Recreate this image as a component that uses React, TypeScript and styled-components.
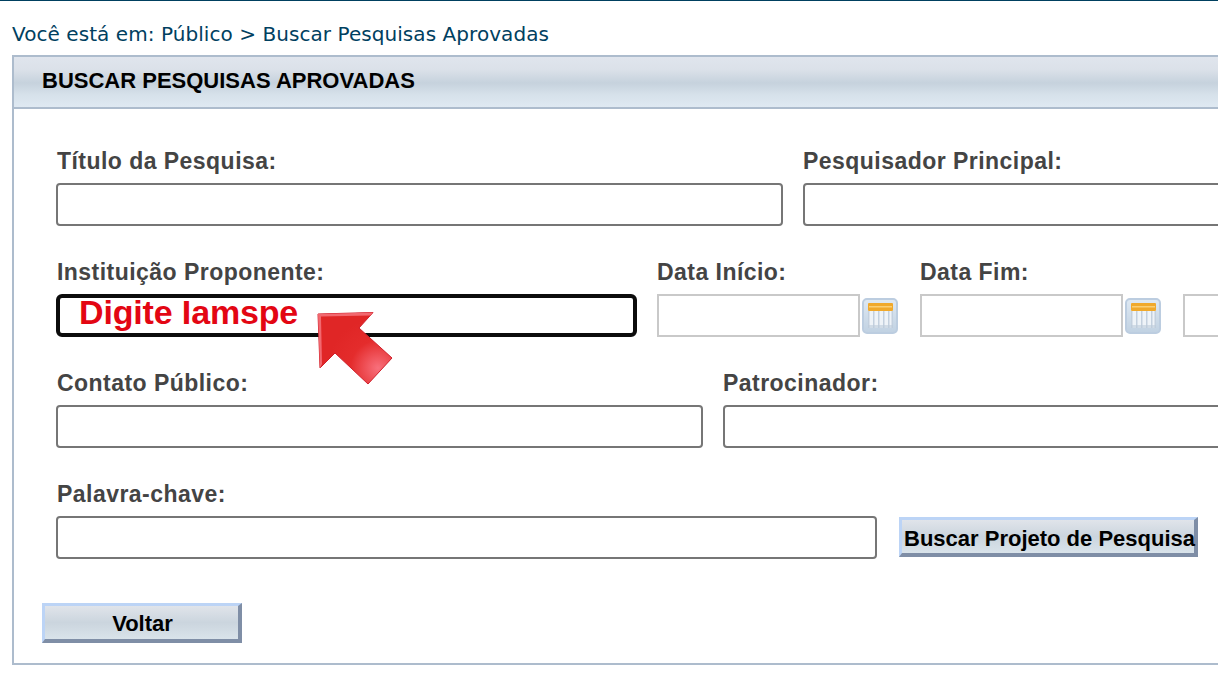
import React from "react";
import styled, { createGlobalStyle } from "styled-components";

const Global = createGlobalStyle`
  html, body { margin: 0; padding: 0; background: #fff; overflow: hidden; }
  body { width: 1218px; height: 675px; }
`;
const Page = styled.div`
  width: 1218px; height: 675px; overflow: hidden; box-sizing: border-box;
  border-top: 1px solid #004060; padding: 20px 0 0 12px; position: relative;
`;
const Crumb = styled.div`
  font: 20px/26px "DejaVu Sans", Verdana, sans-serif; color: #004060; height: 34px; letter-spacing: .06px;
`;
const Panel = styled.section`
  width: 1300px; height: 610px; box-sizing: border-box; border: 2px solid #adbccd;
`;
const PanelHead = styled.h1`
  margin: 0; height: 52px; box-sizing: border-box; border-bottom: 2px solid #adbccd; padding-left: 28px;
  background: linear-gradient(#e0e5ed 0%, #dbe1e9 25%, #c6d2dd 52%, #d6e1ea 75%, #dfe9f2 100%);
  font: bold 22px/48px "Liberation Sans", Arial, sans-serif; color: #000;
`;
const Body = styled.div`
  padding: 41px 0 0 43px; display: flex; flex-direction: column;
`;
const Row = styled.div<{ $h?: number }>`
  display: flex; height: ${p => p.$h ?? 111}px;
`;
const Field = styled.div<{ $w?: number; $gap?: number }>`
  width: ${p => (p.$w ? p.$w + "px" : "auto")}; margin-right: ${p => p.$gap ?? 20}px; flex: none; position: relative;
`;
const Label = styled.label`
  display: block; height: 22px; font: bold 23px/22px "Liberation Sans", Arial, sans-serif; color: #444; letter-spacing: .46px; white-space: nowrap;
`;
const TextBox = styled.div<{ $w?: number; $lead?: boolean }>`
  width: ${p => p.$w ?? 726}px; height: 43px; margin: 11px 0 0 ${p => (p.$lead ? -1 : 0)}px; box-sizing: border-box; background: #fff;
  border: 2px solid #767676; border-radius: 4px;
`;
const Focused = styled(TextBox)`
  border: 4px solid #0c0c0c; border-radius: 6px;
`;
const DateBox = styled.div<{ $w?: number }>`
  width: ${p => p.$w ?? 203}px; height: 43px; margin-top: 11px; box-sizing: border-box; border: 2px solid #c9c9c9; background: #fff; flex: none;
`;
const DateLine = styled.div`
  display: flex; align-items: flex-start;
`;
const CalIcon = styled.svg`
  width: 36px; height: 36px; margin: 15px 0 0 2px; flex: none; filter: blur(.4px);
`;
const Hint = styled.span`
  position: absolute; left: 22px; top: 32px; font: bold 34px/38px "Liberation Sans", Arial, sans-serif; color: #e30613; white-space: nowrap; letter-spacing: -.15px;
`;
const Arrow = styled.svg`
  position: absolute; left: 310px; top: 305px; width: 90px; height: 85px;
`;
const Bevel = styled.button<{ $w: number }>`
  width: ${p => p.$w}px; height: 40px; box-sizing: border-box; padding: 2px 0 0 2px; flex: none;
  border-style: solid; border-width: 3px 4px 4px 3px; border-color: #bcd4f6 #7f8ea6 #7f8ea6 #bcd4f6;
  background: linear-gradient(#e0e4ea 0%, #cbd5de 50%, #d9e3ea 100%);
  font: bold 22px/24px "Liberation Sans", Arial, sans-serif; color: #000; white-space: nowrap;
`;
const SearchBtn = styled(Bevel)`
  margin: 12px 0 0 22px; padding-top: 4px;
`;
const BackBtn = styled(Bevel)`
  margin: 0 0 0 -15px;
`;

const Calendar = ({ id }: { id: string }) => (
  <CalIcon viewBox="0 0 36 36">
    <defs>
      <linearGradient id={id} x1="0" y1="0" x2="0" y2="1">
        <stop offset="0" stopColor="#dfe9f3" />
        <stop offset="1" stopColor="#c0d1e2" />
      </linearGradient>
    </defs>
    <rect x="1" y="1" width="34" height="34" rx="4" fill={`url(#${id})`} stroke="#bccde0" strokeWidth="2" />
    <rect x="6" y="12" width="25" height="18" fill="#eef3f8" />
    <rect x="6" y="5" width="25" height="8" rx="1" fill="#f0a92c" />
    <rect x="7" y="8" width="23" height="1.500" fill="#fbcf74" />
    {[6, 11, 16, 21, 26, 29.500].map(x => (
      <rect key={x} x={x} y="13" width="1.500" height="17" fill="#c3d0de" />
    ))}
    <rect x="6" y="27" width="25" height="3" fill="#bccbda" opacity=".6" />
  </CalIcon>
);

export default function App() {
  return (
    <Page>
      <Global />
      <Crumb>Você está em: Público &gt; Buscar Pesquisas Aprovadas</Crumb>
      <Panel>
        <PanelHead>BUSCAR PESQUISAS APROVADAS</PanelHead>
        <Body>
          <Row>
            <Field $w={726}><Label>Título da Pesquisa:</Label><TextBox $w={727} $lead /></Field>
            <Field><Label>Pesquisador Principal:</Label><TextBox $w={500} /></Field>
          </Row>
          <Row>
            <Field $w={580}>
              <Label>Instituição Proponente:</Label>
              <Focused $w={581} $lead />
              <Hint>Digite Iamspe</Hint>
            </Field>
            <Field $w={243}>
              <Label>Data Início:</Label>
              <DateLine><DateBox /><Calendar id="cal-a" /></DateLine>
            </Field>
            <Field $w={243}>
              <Label>Data Fim:</Label>
              <DateLine><DateBox /><Calendar id="cal-b" /></DateLine>
            </Field>
            <Field><Label>&nbsp;</Label><DateBox $w={120} /></Field>
          </Row>
          <Row>
            <Field $w={646}><Label>Contato Público:</Label><TextBox $w={647} $lead /></Field>
            <Field><Label>Patrocinador:</Label><TextBox $w={580} /></Field>
          </Row>
          <Row $h={120}>
            <Field $w={820} $gap={0}><Label>Palavra-chave:</Label><TextBox $w={821} $lead /></Field>
            <Field $gap={0}><Label>&nbsp;</Label><SearchBtn $w={299}>Buscar Projeto de Pesquisa</SearchBtn></Field>
          </Row>
          <Row $h={40}><BackBtn $w={200}>Voltar</BackBtn></Row>
        </Body>
      </Panel>
      <Arrow viewBox="0 0 90 85">
        <defs>
          <radialGradient id="arrow-fill" gradientUnits="userSpaceOnUse" cx="68" cy="62" r="50">
            <stop offset="0" stopColor="#f8707c" />
            <stop offset=".55" stopColor="#e42c2c" />
            <stop offset="1" stopColor="#e02626" />
          </radialGradient>
        </defs>
        <polygon points="8,8 63,6.5 49,22 82,52 58,78 25,47 10,62" fill="url(#arrow-fill)" stroke="#d0202c" strokeWidth="1" strokeLinejoin="round" />
        <polygon points="8,8 63,6.5 60,9.500 11,10.500 12,58 10,62" fill="#f2686f" />
      </Arrow>
    </Page>
  );
}
